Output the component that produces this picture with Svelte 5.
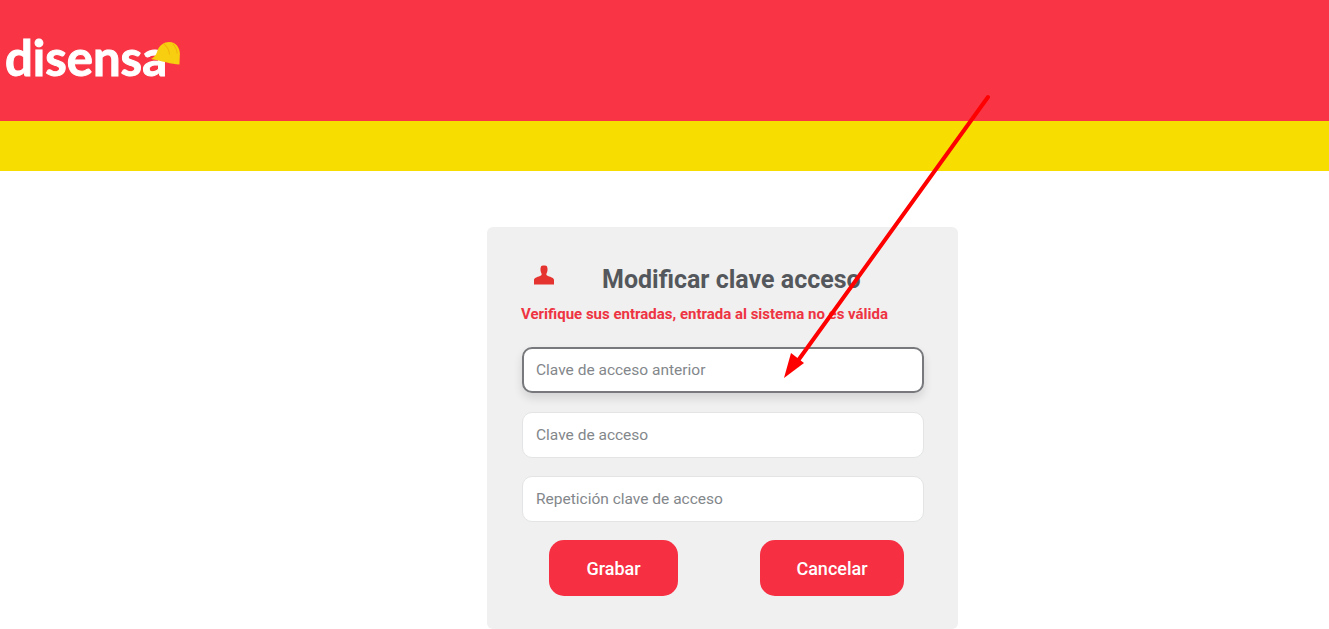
<script>
  const fields = [
    { label: 'Clave de acceso anterior', focused: true },
    { label: 'Clave de acceso', focused: false },
    { label: 'Repetición clave de acceso', focused: false }
  ];
</script>

<div class="page">
  <header class="brand-bar">
    <div class="logo">
      <span class="logo-text">disensa</span>
      <svg class="helmet" viewBox="0 0 34 30" aria-hidden="true">
        <path d="M1 20 C6 17 7 14 8 11 C10 4 16 1 21 1 C29 1 33 8 33 14 L32.500 26 C24 26 12 22 1 20 Z" fill="#f8cf10" />
        <path d="M15 3 C19 6 21 10 21.500 15 M25 3 C28 6 29.500 10 30 14" fill="none" stroke="#f3b40c" stroke-width="1.200" />
      </svg>
    </div>
  </header>
  <div class="stripe"></div>

  <main class="content">
    <section class="card">
      <div class="heading">
        <svg class="user" viewBox="0 0 22 20" aria-hidden="true">
          <path d="M8 1.500 C8.500 0.300 13.500 0.300 14 1.500 C15 3.500 14.500 7 13.500 8.500 C13 9.500 13.500 10.500 15 11 C18 12 21 13 21 15 L21 19.500 L1 19.500 L1 15 C1 13 4 12 7 11 C8.500 10.500 9 9.500 8.500 8.500 C7.500 7 7 3.500 8 1.500 Z" fill="#e5332f" />
        </svg>
        <h1>Modificar clave acceso</h1>
      </div>
      <p class="error">Verifique sus entradas, entrada al sistema no es válida</p>
      <form class="fields">
        {#each fields as field}
          <div class="field" class:focused={field.focused}>{field.label}</div>
        {/each}
      </form>
      <div class="actions">
        <button type="button" class="grabar">Grabar</button>
        <button type="button" class="cancelar">Cancelar</button>
      </div>
    </section>
  </main>

  <svg class="arrow" viewBox="0 0 1329 629" aria-hidden="true">
    <line x1="988" y1="97" x2="797" y2="362" stroke="#ff0000" stroke-width="4" stroke-linecap="round" />
    <polygon points="784,378 791,353 804,363" fill="#ff0000" />
  </svg>
</div>

<style>
  :global(body) {
    margin: 0;
    background: #fff;
  }
  .page {
    position: relative;
    width: 1329px;
    height: 629px;
    overflow: hidden;
    font-family: Roboto, "Liberation Sans", sans-serif;
  }
  .brand-bar {
    height: 121px;
    box-sizing: border-box;
    padding: 28px 0 0 5px;
    background: #f93445;
  }
  .logo {
    position: relative;
    width: 180px;
    height: 60px;
  }
  .logo-text {
    display: block;
    color: #fff;
    font-family: Lato, "Noto Sans", sans-serif;
    font-size: 49px;
    font-weight: 700;
    line-height: 58px;
    letter-spacing: 0;
    -webkit-text-stroke: 1px #fff;
  }
  .helmet {
    position: absolute;
    left: 145px;
    top: 13px;
    width: 31px;
    height: 27px;
  }
  .stripe {
    height: 50px;
    background: #f8de00;
  }
  .content {
    display: flex;
    justify-content: center;
    padding: 56px 0 0 116px;
    box-sizing: border-box;
  }
  .card {
    width: 471px;
    height: 402px;
    flex: none;
    box-sizing: border-box;
    padding: 0 34px 0 35px;
    background: #f0f0f0;
    border-radius: 6px;
  }
  .heading {
    display: flex;
    align-items: flex-start;
    height: 70px;
    padding: 38px 0 0 11px;
    box-sizing: border-box;
  }
  .user {
    width: 22px;
    height: 20px;
    flex: none;
  }
  h1 {
    margin: 0 0 0 47px;
    color: #54585c;
    font-size: 25px;
    font-weight: 700;
    line-height: 29px;
    white-space: nowrap;
  }
  .error {
    margin: 7px 0 0 -1px;
    color: #ee3342;
    font-size: 15px;
    font-weight: 700;
    line-height: 20px;
    white-space: nowrap;
  }
  .fields {
    display: flex;
    flex-direction: column;
    gap: 18.500px;
    margin-top: 23px;
  }
  .field {
    height: 46px;
    box-sizing: border-box;
    padding: 0 13px;
    display: flex;
    align-items: center;
    color: #83878b;
    background: #fff;
    border: 1px solid #e2e4e6;
    border-radius: 10px;
    font-size: 15.500px;
  }
  .field.focused {
    border: 2px solid #77797c;
    padding: 0 12px;
    box-shadow: 0 5px 10px rgba(0, 0, 0, 0.12);
  }
  .actions {
    display: flex;
    margin-top: 18px;
    padding-left: 27px;
    gap: 82px;
  }
  button {
    height: 56px;
    border: 0;
    border-radius: 15px;
    color: #fff;
    background: #f62f43;
    font-family: Roboto, "Liberation Sans", sans-serif;
    font-size: 18px;
    font-weight: 500;
    padding: 0;
  }
  .grabar { width: 129px; }
  .cancelar { width: 144px; }
  .arrow {
    position: absolute;
    inset: 0;
    width: 1329px;
    height: 629px;
    pointer-events: none;
  }
</style>
